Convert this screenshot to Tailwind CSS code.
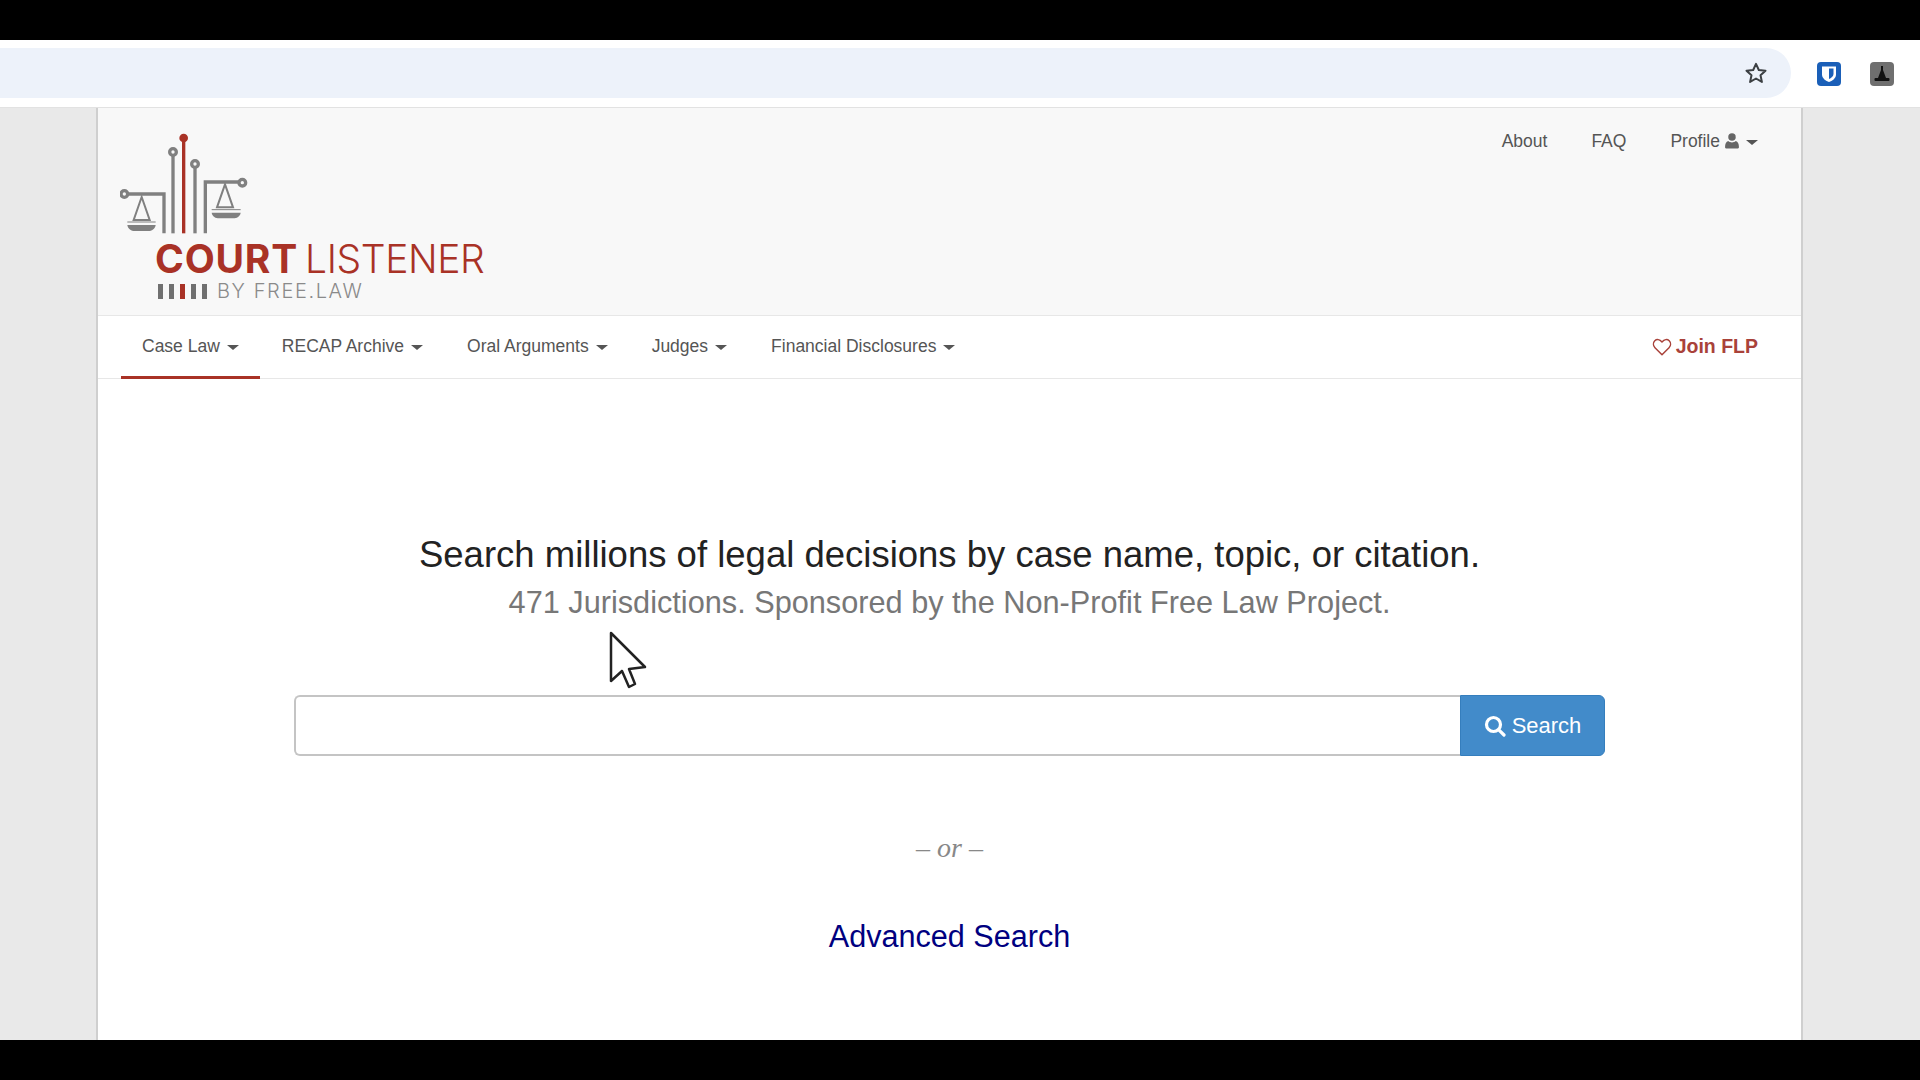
<!DOCTYPE html>
<html lang="en">
  <head>
    <meta charset="UTF-8" />
    <title>CourtListener</title>
    <script src="https://cdn.jsdelivr.net/npm/@tailwindcss/browser@4"></script>
  </head>
  <body class="relative flex flex-col h-screen overflow-hidden bg-black font-['Liberation_Sans',sans-serif]">
    <div class="h-10 bg-black"></div>

    <!-- browser toolbar -->
    <div class="h-[68px] bg-white flex items-center border-b border-[#e2e2e2]">
      <div class="w-[1791px] h-[50px] mt-[-2px] bg-[#edf2fa] rounded-r-[25px] flex items-center justify-end pr-[23px]">
        <svg class="w-[24px] h-[24px]" viewBox="0 0 24 24" fill="none" stroke="#3c4043" stroke-width="2" stroke-linejoin="round">
          <polygon points="12,2.8 14.8,9 21.5,9.7 16.5,14.2 17.900,20.900 12,17.500 6.100,20.900 7.500,14.200 2.500,9.700 9.200,9" />
        </svg>
      </div>
      <div class="ml-[26px] w-6 h-6 rounded-[4px] bg-[#1a5fb8] flex items-center justify-center">
        <svg class="w-[18px] h-[18px]" viewBox="0 0 18 18">
          <path d="M2 1.500h14v8c0 4-4 6.500-7 7.500-3-1-7-3.500-7-7.500z" fill="#fff" />
          <path d="M9 3.500h4.500v5.500c0 2.500-2.500 4-4.500 5z" fill="#1a5fb8" />
        </svg>
      </div>
      <div class="ml-[29px] w-6 h-6 rounded-[4px] bg-[#6f6f6f] flex items-center justify-center">
        <svg class="w-[18px] h-[18px]" viewBox="0 0 18 18" fill="#111">
          <path d="M8 1h2v4l3 8H5l3-8z" />
          <rect x="1.500" y="13" width="15" height="3" rx="1" />
        </svg>
      </div>
    </div>

    <div class="flex-1 min-h-0 bg-[#e9e9e9] flex pl-[96px]">
      <div class="w-[1707px] bg-white border-x-2 border-[#cfcfcf] flex flex-col">
        <!-- logo row -->
        <header class="h-[208px] shrink-0 bg-[#f8f8f8] border-b border-[#e7e7e7] flex justify-between">
          <div class="pl-[22px] pt-[24px]">
            <svg class="block w-[134px] h-[104px]" viewBox="90 98 402 312" fill="none" stroke="#808080" stroke-width="10">
              <path d="M113 284H222V402" />
              <circle cx="103" cy="284" r="10" fill="#f8f8f8" />
              <path d="M249 402V168" />
              <circle cx="249" cy="158" r="10" fill="#f8f8f8" />
              <path d="M315 402V204" />
              <circle cx="315" cy="194" r="10" fill="#f8f8f8" />
              <path d="M346 402V248H447" />
              <circle cx="457" cy="250" r="10" fill="#f8f8f8" />
              <path d="M281 402V120" stroke="#a93226" />
              <circle cx="281" cy="116" r="13" fill="#a93226" stroke="none" />
              <path d="M155 293L131 362H179Z" stroke-width="6" />
              <path d="M112 368H197" stroke-width="3" />
              <path d="M112 377H197C195 390 185 395 175 395H134C124 395 114 390 112 377Z" fill="#808080" stroke="none" />
              <path d="M405 255L381 324H429Z" stroke-width="6" />
              <path d="M365 331H452" stroke-width="3" />
              <path d="M365 340H452C450 352 440 357 430 357H387C377 357 367 352 365 340Z" fill="#808080" stroke="none" />
            </svg>
            <div class="ml-[35px] mt-[3px] h-[40px] whitespace-nowrap font-['Inter',sans-serif] text-[39px] leading-[40px] text-[#a93226]">
              <span class="font-bold tracking-[0.8px]">COURT</span> <span class="-ml-1 font-light tracking-[-0.4px]">LISTENER</span>
            </div>
            <div class="ml-[38px] mt-[2px] flex items-center gap-[10px]">
              <div class="flex gap-[6px]">
                <span class="w-[5px] h-[15px] bg-[#707070]"></span>
                <span class="w-[5px] h-[15px] bg-[#707070]"></span>
                <span class="w-[5px] h-[15px] bg-[#a93226]"></span>
                <span class="w-[5px] h-[15px] bg-[#707070]"></span>
                <span class="w-[5px] h-[15px] bg-[#707070]"></span>
              </div>
              <span class="font-['Inter',sans-serif] font-light text-[20px] leading-5 tracking-[1.600px] text-[#8a8a8a] whitespace-nowrap">BY FREE.LAW</span>
            </div>
          </div>
          <nav class="flex items-start gap-[44px] pt-[22px] pr-[43px] text-[17.5px] leading-[22px] text-[#555] whitespace-nowrap">
            <a>About</a>
            <a>FAQ</a>
            <a class="flex items-center">
              Profile
              <svg class="ml-[5px] w-[14px] h-[16px]" viewBox="0 0 13 15" fill="#666">
                <circle cx="6.500" cy="3.800" r="3.500" />
                <path d="M1 14.500c-.8 0-1-.6-1-1.500 0-3 1-5 3-5.500 1 1 2.200 1.300 3.500 1.300s2.500-.3 3.500-1.300c2 .5 3 2.500 3 5.500 0 .9-.2 1.500-1 1.500z" />
              </svg>
              <span class="ml-[7px] mt-[2px] border-x-[6px] border-t-[5px] border-x-transparent border-t-[#555]"></span>
            </a>
          </nav>
        </header>

        <!-- main nav -->
        <div class="h-[63px] shrink-0 border-b border-[#e7e7e7] flex justify-between pl-[23px] pr-[43px] text-[17.5px] text-[#555] whitespace-nowrap">
          <ul class="flex">
            <li class="flex items-center px-[21px] border-b-[3px] border-[#a93226] h-[63px]">
              Case Law<span class="ml-[7px] mt-[2px] border-x-[6px] border-t-[5px] border-x-transparent border-t-[#555]"></span>
            </li>
            <li class="flex items-center px-[22px] h-[63px] pb-[3px]">
              RECAP Archive<span class="ml-[7px] mt-[2px] border-x-[6px] border-t-[5px] border-x-transparent border-t-[#555]"></span>
            </li>
            <li class="flex items-center px-[22px] h-[63px] pb-[3px]">
              Oral Arguments<span class="ml-[7px] mt-[2px] border-x-[6px] border-t-[5px] border-x-transparent border-t-[#555]"></span>
            </li>
            <li class="flex items-center px-[22px] h-[63px] pb-[3px]">
              Judges<span class="ml-[7px] mt-[2px] border-x-[6px] border-t-[5px] border-x-transparent border-t-[#555]"></span>
            </li>
            <li class="flex items-center px-[22px] h-[63px] pb-[3px]">
              Financial Disclosures<span class="ml-[7px] mt-[2px] border-x-[6px] border-t-[5px] border-x-transparent border-t-[#555]"></span>
            </li>
          </ul>
          <a class="flex items-center pb-[1px] font-bold text-[19.500px] text-[#a9423a]">
            <svg class="mr-[4px] w-5 h-[18px]" viewBox="0 0 24 22" fill="none" stroke="#a9423a" stroke-width="1.800" stroke-linejoin="round">
              <path d="M12 20.500 3.400 11.800C1 9.300 1 5.600 3.200 3.400c2.300-2.200 5.900-2 8.800 1.400 2.900-3.400 6.500-3.600 8.800-1.400 2.200 2.200 2.200 5.900-.2 8.400z" />
            </svg>
            Join FLP
          </a>
        </div>

        <!-- search -->
        <main class="flex-1 flex flex-col items-center pt-[154px]">
          <h1 class="text-[36.500px] leading-[44px] text-[#222] whitespace-nowrap">Search millions of legal decisions by case name, topic, or citation.</h1>
          <h2 class="mt-[4px] text-[30.700px] leading-[44px] text-[#777] whitespace-nowrap">471 Jurisdictions. Sponsored by the Non-Profit Free Law Project.</h2>
          <form class="mt-[70px] flex w-[1311px] h-[61px]">
            <input class="flex-1 min-w-0 bg-white border-2 border-r-0 border-[#c4c4c4] rounded-l-[6px]" />
            <button type="button" class="w-[145px] flex items-center justify-center gap-[6px] bg-[#428bca] border border-[#357ebd] rounded-r-[6px] text-white text-[22px]">
              <svg class="w-[22px] h-[22px]" viewBox="0 0 22 22" fill="none" stroke="#fff" stroke-width="3.200" stroke-linecap="round">
                <circle cx="9.500" cy="9.500" r="7" />
                <path d="M14.800 14.800 20 20" />
              </svg>
              Search
            </button>
          </form>
          <p class="mt-[74px] text-[28px] leading-[36px] italic text-[#888] font-['Liberation_Serif',serif]">– or –</p>
          <a class="mt-[50px] text-[30.600px] leading-[40px] text-[#000080]">Advanced Search</a>
        </main>
      </div>
    </div>

    <div class="h-10 shrink-0 bg-black"></div>

    <!-- mouse pointer captured in the screenshot -->
    <svg class="absolute left-[605px] top-[628px] w-[46px] h-[64px]" viewBox="0 0 46 64" fill="#fff" stroke="#222" stroke-width="2.500" stroke-linejoin="round">
      <path d="M6 5 40 39 24 41 30 56 24 59 17 43 6 53Z" />
    </svg>
  </body>
</html>
